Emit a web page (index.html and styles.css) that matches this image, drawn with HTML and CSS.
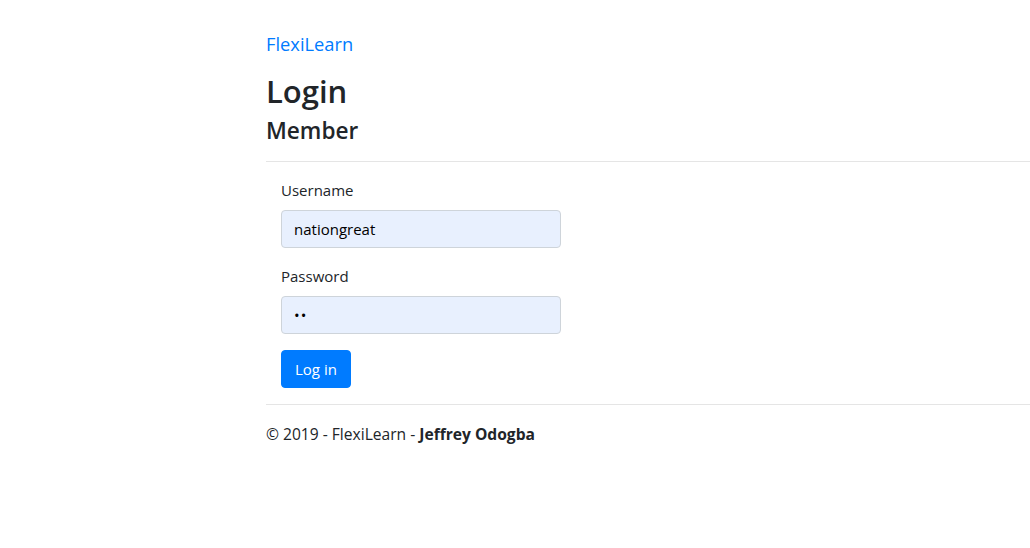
FILE: index.html
```html
<!DOCTYPE html>
<html lang="en">
<head>
<meta charset="utf-8">
<title>Login - FlexiLearn</title>
<link rel="stylesheet" href="styles.css">
</head>
<body>
<div class="page">
  <header class="navbar">
    <a class="brand" href="#">FlexiLearn</a>
  </header>
  <main class="main">
    <h1 class="title">Login</h1>
    <h4 class="subtitle">Member</h4>
    <hr class="rule">
    <form class="login-form">
      <div class="form-group">
        <label class="label" for="username">Username</label>
        <input class="input" id="username" type="text" value="nationgreat">
      </div>
      <div class="form-group">
        <label class="label" for="password">Password</label>
        <input class="input" id="password" type="password" value="ab">
      </div>
      <button class="btn" type="button">Log in</button>
    </form>
  </main>
  <footer class="footer">
    © 2019 - FlexiLearn - <strong>Jeffrey Odogba</strong>
  </footer>
</div>
</body>
</html>
```

FILE: styles.css
```css
html, body {
  margin: 0;
  padding: 0;
  background: #fff;
  overflow: hidden;
}

body {
  font-family: "Open Sans", "Noto Sans", sans-serif;
  font-size: 15px;
  line-height: 24px;
  color: #212529;
}

.page {
  padding-left: 266px;
}

.navbar {
  padding-top: 29px;
  height: 30px;
  display: flex;
  align-items: center;
}

.brand {
  color: #007bff;
  text-decoration: none;
  font-size: 18.3px;
  line-height: 30px;
}

.main {
  padding-top: 13px;
}

.title {
  margin: 0 0 6px;
  font-size: 31px;
  line-height: 38px;
  font-weight: 600;
}

.subtitle {
  margin: 0;
  font-size: 22.6px;
  line-height: 29px;
  font-weight: 600;
}

.rule {
  margin: 16px 0;
  border: 0;
  border-top: 1px solid rgba(0, 0, 0, 0.1);
  height: 0;
}

.login-form {
  padding-left: 15px;
  width: 280px;
}

.form-group {
  margin-bottom: 16px;
}

.label {
  display: block;
  margin-bottom: 8px;
}

.input {
  display: block;
  box-sizing: border-box;
  width: 280px;
  height: 38px;
  padding: 6px 12px;
  font-family: inherit;
  font-size: 15px;
  color: #000;
  background: #e8f0fe;
  border: 1px solid #ced4da;
  border-radius: 4px;
}

#password {
  letter-spacing: 1px;
}

.btn {
  height: 38px;
  padding: 6px 13px;
  font-family: inherit;
  font-size: 15px;
  color: #fff;
  background: #007bff;
  border: 1px solid #007bff;
  border-radius: 4px;
}

.footer {
  margin-top: 16px;
  border-top: 1px solid rgba(0, 0, 0, 0.1);
  padding-top: 17px;
  font-size: 15.6px;
}

.footer strong {
  font-weight: 700;
}
```
